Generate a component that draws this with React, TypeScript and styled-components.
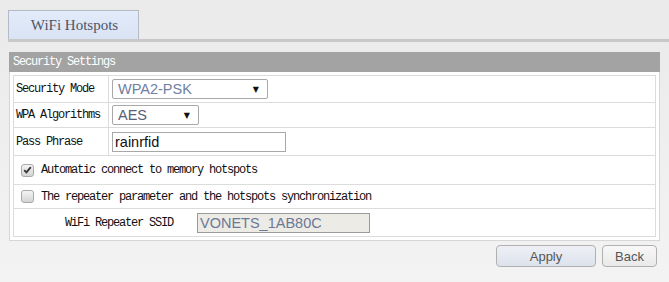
import React from "react";
import styled, { createGlobalStyle } from "styled-components";

const Global = createGlobalStyle`
  html, body { margin: 0; padding: 0; }
  body { background: linear-gradient(#eaeaea, #f3f3f3); width: 669px; height: 282px; overflow: hidden; }
`;

const Page = styled.div`
  width: 669px;
  height: 282px;
  padding-top: 10px;
  box-sizing: border-box;
  display: flex;
  flex-direction: column;
`;

const TabBar = styled.div`
  margin-left: 8px;
  border-bottom: 3px solid #c8c8c8;
  display: flex;
`;

const Tab = styled.div`
  width: 127px;
  height: 28px;
  border: 1px solid #b4bac6;
  border-bottom: none;
  background: linear-gradient(#e2ebfa, #d9e3f3);
  font-family: "Liberation Serif", serif;
  font-size: 15px;
  color: #4e5466;
  display: flex;
  align-items: center;
  justify-content: center;
  padding-left: 2px;
`;

const Main = styled.div`
  margin-top: 10px;
  display: flex;
  flex-direction: column;
  width: 651px;
  margin-left: 9px;
`;

const Header = styled.div`
  height: 20px;
  background: #a3a3a3;
  color: #fff;
  font-family: "Liberation Mono", monospace;
  font-size: 12px;
  letter-spacing: -1.2px;
  display: flex;
  align-items: center;
  padding-left: 4px;
`;

const Panel = styled.div`
  background: #fff;
  border: 1px solid #d6d6d6;
  border-top: none;
  padding: 3px;
`;

const Table = styled.div`
  border: 1px solid #dcdcdc;
  display: flex;
  flex-direction: column;
`;

const Row = styled.div<{ $h: number; $last?: boolean }>`
  height: ${(p) => p.$h}px;
  border-bottom: ${(p) => (p.$last ? "none" : "1px solid #dcdcdc")};
  display: flex;
  align-items: center;
  box-sizing: border-box;
  font-family: "Liberation Mono", monospace;
  font-size: 12px;
  letter-spacing: -1.2px;
  color: #111;
`;

const Label = styled.div`
  width: 95px;
  height: 100%;
  border-right: 1px solid #dcdcdc;
  display: flex;
  align-items: center;
  padding-left: 2px;
  box-sizing: border-box;
`;

const Field = styled.div`
  padding-left: 3px;
  display: flex;
  align-items: center;
`;

const Select = styled.div<{ $w: number; $color: string }>`
  width: ${(p) => p.$w}px;
  height: 20px;
  border: 1px solid #a8a8a8;
  border-radius: 2px;
  box-sizing: border-box;
  display: flex;
  align-items: center;
  justify-content: space-between;
  padding: 0 8px 0 5px;
  font-family: "Liberation Sans", Arial, sans-serif;
  font-size: 14.5px;
  letter-spacing: 0;
  color: ${(p) => p.$color};
  background: #fff;
`;

const Arrow = styled.span`
  font-family: "DejaVu Sans", sans-serif;
  font-size: 8px;
  color: #111;
`;

const Input = styled.div<{ $w: number; $disabled?: boolean }>`
  width: ${(p) => p.$w}px;
  height: 20px;
  border: 1px solid ${(p) => (p.$disabled ? "#9a9a9a" : "#a8a8a8")};
  box-sizing: border-box;
  display: flex;
  align-items: center;
  padding-left: 2px;
  font-family: "Liberation Sans", Arial, sans-serif;
  font-size: 14.5px;
  letter-spacing: 0;
  color: ${(p) => (p.$disabled ? "#6c7896" : "#111")};
  background: ${(p) => (p.$disabled ? "#ecebe6" : "#fff")};
`;

const CheckRow = styled.div`
  display: flex;
  align-items: center;
  padding-left: 7px;
  gap: 7px;
`;

const Box = styled.span`
  width: 11px;
  height: 11px;
  border: 1px solid #a9a9a9;
  border-radius: 3px;
  background: linear-gradient(#f4f4f4, #d4d4d4);
  display: flex;
  align-items: center;
  justify-content: center;
`;

const SsidLabel = styled.div`
  padding-left: 51px;
  width: 183px;
  box-sizing: border-box;
`;

const Buttons = styled.div`
  display: flex;
  justify-content: flex-end;
  gap: 6px;
  margin-top: 4px;
  margin-right: 3px;
  margin-left: 9px;
  width: 648px;
`;

const Button = styled.div<{ $w: number; $primary?: boolean }>`
  width: ${(p) => p.$w}px;
  height: 22px;
  box-sizing: border-box;
  border: 1px solid #b0b0b0;
  border-radius: 4px;
  background: ${(p) =>
    p.$primary ? "linear-gradient(#eef0f6, #dde2ec)" : "linear-gradient(#f8f8f8, #e9e9e9)"};
  font-family: "Liberation Sans", Arial, sans-serif;
  font-size: 13px;
  color: #555;
  display: flex;
  align-items: center;
  justify-content: center;
`;

const Check = () => (
  <svg width="9" height="8" viewBox="0 0 9 8">
    <path d="M1.2 4.2 L3.4 6.4 L7.8 1.2" stroke="#333" strokeWidth="1.8" fill="none" />
  </svg>
);

export default function App() {
  return (
    <>
      <Global />
      <Page>
        <TabBar>
          <Tab>WiFi Hotspots</Tab>
        </TabBar>
        <Main>
          <Header>Security Settings</Header>
          <Panel>
            <Table>
              <Row $h={27}>
                <Label>Security Mode</Label>
                <Field>
                  <Select $w={156} $color="#7080a2">
                    WPA2-PSK<Arrow>▼</Arrow>
                  </Select>
                </Field>
              </Row>
              <Row $h={25}>
                <Label>WPA Algorithms</Label>
                <Field>
                  <Select $w={87} $color="#586074">
                    AES<Arrow>▼</Arrow>
                  </Select>
                </Field>
              </Row>
              <Row $h={28}>
                <Label>Pass Phrase</Label>
                <Field>
                  <Input $w={174}>rainrfid</Input>
                </Field>
              </Row>
              <Row $h={29}>
                <CheckRow>
                  <Box>
                    <Check />
                  </Box>
                  Automatic connect to memory hotspots
                </CheckRow>
              </Row>
              <Row $h={24}>
                <CheckRow>
                  <Box />
                  The repeater parameter and the hotspots synchronization
                </CheckRow>
              </Row>
              <Row $h={27} $last>
                <SsidLabel>WiFi Repeater SSID</SsidLabel>
                <Input $w={173} $disabled>
                  VONETS_1AB80C
                </Input>
              </Row>
            </Table>
          </Panel>
        </Main>
        <Buttons>
          <Button $w={100} $primary>
            Apply
          </Button>
          <Button $w={55}>Back</Button>
        </Buttons>
      </Page>
    </>
  );
}
